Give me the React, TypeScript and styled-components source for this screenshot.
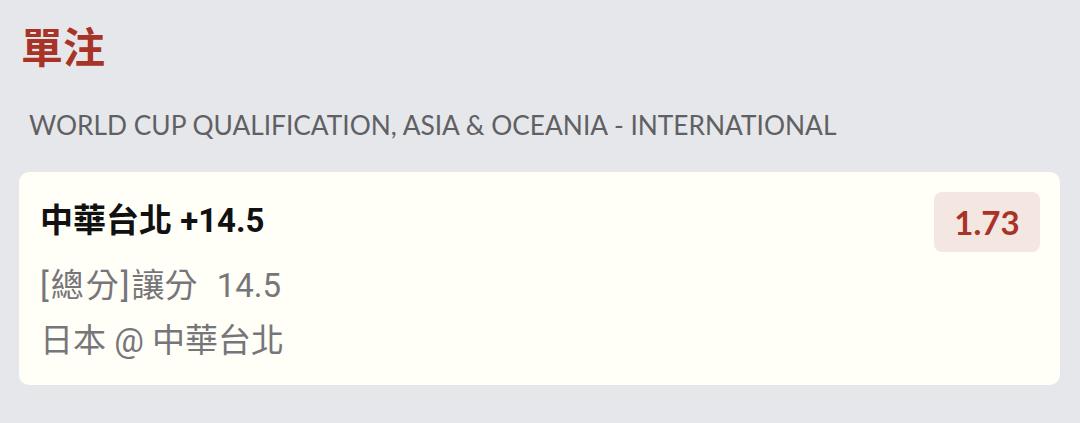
import React from "react";
import styled, { createGlobalStyle } from "styled-components";

const Global = createGlobalStyle`
  html, body { margin: 0; padding: 0; background: #e6e7ea; }
  body { font-family: Lato, "Noto Sans CJK TC", sans-serif; }
`;

const Page = styled.div`
  padding: 22px 20px 0 19px;
  display: flex;
  flex-direction: column;
`;

const Title = styled.h1`
  margin: 0 0 0 2px;
  font-family: Lato, "Noto Sans CJK TC", sans-serif;
  font-size: 42px;
  line-height: 50px;
  font-weight: 700;
  color: #a83327;
`;

const League = styled.div`
  margin: 37px 0 0 10px;
  font-size: 26.3px;
  line-height: 32px;
  color: #5f6064;
  letter-spacing: 0;
`;

const Card = styled.div`
  margin-top: 31px;
  background: #fffef7;
  border-radius: 10px;
  padding: 19px 20px 19px 21px;
  display: flex;
  justify-content: space-between;
  align-items: flex-start;
  height: 213px;
  box-sizing: border-box;
`;

const Info = styled.div`
  display: flex;
  flex-direction: column;
`;

const Selection = styled.div`
  font-family: Roboto, "Noto Sans CJK TC", sans-serif;
  font-size: 33px;
  line-height: 44px;
  font-weight: 700;
  color: #111;
  margin-top: 8px;
`;

const Detail = styled.div<{ $gap: number }>`
  font-family: Roboto, "Noto Sans CJK TC", sans-serif;
  font-size: 33px;
  line-height: 44px;
  color: #76767a;
  margin-top: ${(p) => p.$gap}px;
`;

const Bracket = styled.span`
  letter-spacing: 2px;
`;

const Line = styled.span`
  margin-left: 11px;
`;

const Odds = styled.div`
  background: #f4e6e0;
  color: #a83327;
  border-radius: 8px;
  width: 106px;
  height: 60px;
  display: flex;
  align-items: center;
  justify-content: center;
  font-size: 33px;
  font-weight: 700;
  margin-top: 1px;
`;

export default function App() {
  return (
    <Page>
      <Global />
      <Title>單注</Title>
      <League>WORLD CUP QUALIFICATION, ASIA &amp; OCEANIA - INTERNATIONAL</League>
      <Card>
        <Info>
          <Selection>中華台北 +14.5</Selection>
          <Detail $gap={21}>
            <Bracket>[總分]</Bracket>讓分 <Line>14.5</Line>
          </Detail>
          <Detail $gap={11}>日本 @ 中華台北</Detail>
        </Info>
        <Odds>1.73</Odds>
      </Card>
    </Page>
  );
}
